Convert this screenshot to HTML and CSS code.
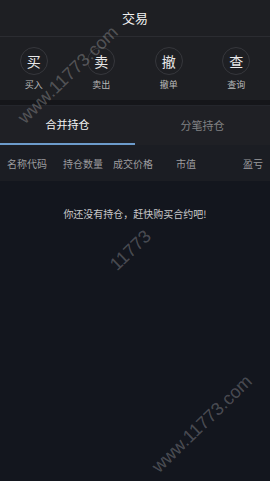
FILE: index.html
```html
<!DOCTYPE html>
<html lang="zh">
<head>
<meta charset="utf-8">
<title>交易</title>
<link rel="stylesheet" href="styles.css">
</head>
<body>
<div class="app">
  <header class="header">交易</header>
  <nav class="actions">
    <div class="action"><span class="circle">买</span><span class="label">买入</span></div>
    <div class="action"><span class="circle">卖</span><span class="label">卖出</span></div>
    <div class="action"><span class="circle">撤</span><span class="label">撤单</span></div>
    <div class="action"><span class="circle">查</span><span class="label">查询</span></div>
  </nav>
  <div class="gap"></div>
  <div class="tabs">
    <div class="tab active">合并持仓</div>
    <div class="tab">分笔持仓</div>
  </div>
  <div class="cols">
    <span>名称代码</span>
    <span>持仓数量</span>
    <span>成交价格</span>
    <span>市值</span>
    <span>盈亏</span>
  </div>
  <div class="empty">你还没有持仓，赶快购买合约吧!</div>
  <span class="wm wm1">www.11773.com</span>
  <span class="wm wm2">11773</span>
  <span class="wm wm3">www.11773.com</span>
</div>
</body>
</html>
```
FILE: styles.css
```css
html, body {
  margin: 0;
  padding: 0;
  background: #13161e;
}
body {
  font-family: "Noto Sans CJK SC", "Liberation Sans", sans-serif;
  color: #e6e6e6;
}
.app {
  position: relative;
  width: 270px;
  height: 481px;
  overflow: hidden;
  background: #13161e;
}
.header {
  height: 37px;
  line-height: 36px;
  text-align: center;
  font-size: 13px;
  color: #f2f2f2;
  background: #1e1f23;
  border-bottom: 1px solid #2b2c31;
  box-sizing: border-box;
}
.actions {
  display: grid;
  grid-template-columns: repeat(4, 1fr);
  height: 63px;
  background: #1e1f23;
  box-sizing: border-box;
  padding-top: 10px;
}
.action {
  display: flex;
  flex-direction: column;
  align-items: center;
}
.circle {
  width: 28px;
  height: 28px;
  border: 1px solid #36373c;
  border-radius: 50%;
  box-sizing: border-box;
  display: flex;
  align-items: center;
  justify-content: center;
  font-size: 14px;
  color: #e8e8e8;
}
.label {
  margin-top: 4px;
  font-size: 9px;
  line-height: 12px;
  color: #b8b8b8;
}
.gap {
  height: 5px;
  background: #15161a;
}
.tabs {
  display: flex;
  height: 40px;
  background: #1f2025;
  border-top: 1px solid #24262c;
  box-sizing: border-box;
}
.tab {
  flex: 1;
  text-align: center;
  font-size: 11px;
  line-height: 39px;
  color: #808083;
  box-sizing: border-box;
}
.tab.active {
  color: #f4f4f4;
  line-height: 37px;
  border-bottom: 2px solid #6c9bcb;
}
.cols {
  display: grid;
  grid-template-columns: 56px 50px 63px 67px auto;
  height: 36px;
  padding-left: 7px;
  align-items: center;
  font-size: 10px;
  color: #9c9c9f;
  background: #1b1d23;
}
.empty {
  margin-top: 25px;
  text-align: center;
  font-size: 10px;
  color: #c9c9cb;
}
.wm {
  position: absolute;
  font-family: "Liberation Sans", sans-serif;
  font-size: 18px;
  color: rgba(255, 255, 255, 0.24);
  white-space: nowrap;
  transform-origin: 0 0;
  transform: rotate(-44deg);
  pointer-events: none;
}
.wm1 { left: 14px; top: 113px; }
.wm2 { left: 106px; top: 260px; }
.wm3 { left: 148px; top: 462px; }
```
